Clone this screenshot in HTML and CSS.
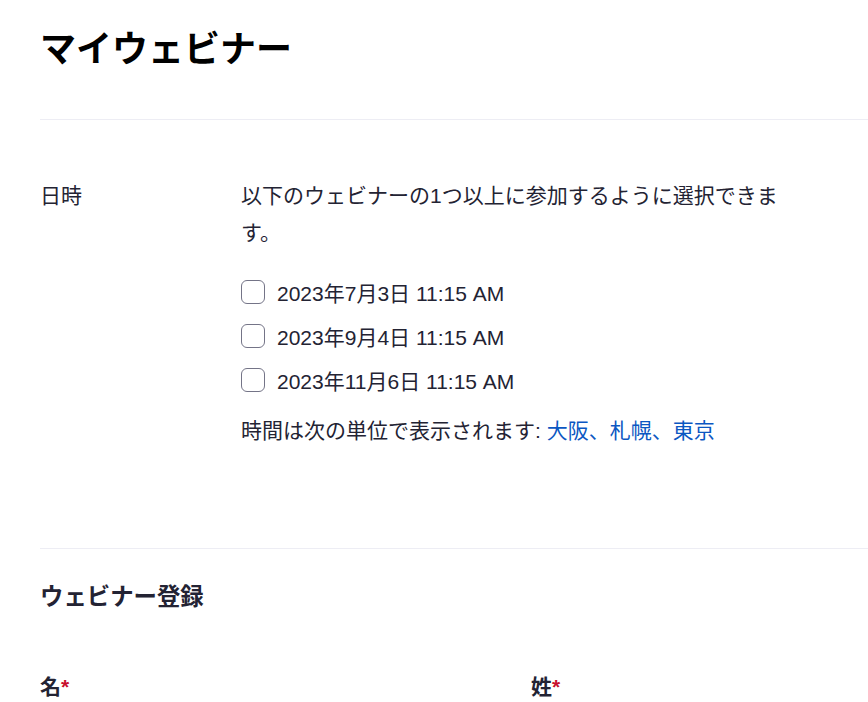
FILE: index.html
```html
<!DOCTYPE html>
<html lang="ja">
<head>
    <meta charset="UTF-8">
    <meta name="viewport" content="width=device-width, initial-scale=1.0">
    <title>マイウェビナー</title>
    <link rel="stylesheet" href="styles.css">
</head>
<body>
    <div class="page">
        <!-- Header -->
        <div class="header">
            <h1 class="title">マイウェビナー</h1>
        </div>

        <!-- Date selection -->
        <div class="section dates">
            <div class="label">日時</div>
            <div class="content">
                <p class="intro">以下のウェビナーの1つ以上に参加するように選択できます。</p>
                <div class="options">
                    <label class="option"><input type="checkbox" class="check"><span>2023年7月3日 11:15 AM</span></label>
                    <label class="option"><input type="checkbox" class="check"><span>2023年9月4日 11:15 AM</span></label>
                    <label class="option"><input type="checkbox" class="check"><span>2023年11月6日 11:15 AM</span></label>
                </div>
                <div class="timezone">時間は次の単位で表示されます: <a href="#" class="tz-link">大阪、札幌、東京</a></div>
            </div>
        </div>

        <!-- Registration -->
        <div class="section register">
            <h2 class="register-title">ウェビナー登録</h2>
            <div class="field-row">
                <div class="field-label">名<span class="required">*</span></div>
                <div class="field-label">姓<span class="required">*</span></div>
            </div>
        </div>
    </div>
</body>
</html>
```

FILE: styles.css
```css
body {
    margin: 0;
    font-family: "Liberation Sans", "Noto Sans CJK JP", sans-serif;
    color: #232333;
    background: #fff;
}
.page {
    padding-left: 40px;
}
.header {
    padding-top: 26px;
    padding-bottom: 46px;
    border-bottom: 1px solid #ededf4;
}
.title {
    margin: 0;
    font-size: 36px;
    line-height: 47px;
    font-weight: bold;
    color: #000;
}
.section {
    display: flex;
}
.dates {
    padding-top: 57px;
    padding-bottom: 99px;
    border-bottom: 1px solid #ededf4;
}
.label {
    width: 201px;
    flex-shrink: 0;
    font-size: 21px;
    line-height: 37px;
}
.content {
    width: 540px;
}
.intro {
    margin: 0;
    font-size: 21px;
    line-height: 37px;
}
.options {
    margin-top: 19px;
}
.option {
    display: flex;
    align-items: center;
    height: 44px;
    font-size: 21px;
}
.check {
    appearance: none;
    -webkit-appearance: none;
    width: 24px;
    height: 24px;
    margin: 0 12px 0 0;
    border: 1.3px solid #747487;
    border-radius: 6px;
    background: #fff;
}
.timezone {
    margin-top: 10px;
    font-size: 21px;
    line-height: 37px;
}
.tz-link {
    color: #0b57c2;
    text-decoration: none;
}
.register {
    flex-direction: column;
    padding-top: 33px;
}
.register-title {
    margin: 0;
    font-size: 23.4px;
    line-height: 30px;
    font-weight: bold;
}
.field-row {
    display: grid;
    grid-template-columns: 491px 1fr;
    margin-top: 61px;
}
.field-label {
    font-size: 21px;
    line-height: 27px;
    font-weight: bold;
}
.required {
    color: #c8102e;
    font-weight: bold;
}
```
